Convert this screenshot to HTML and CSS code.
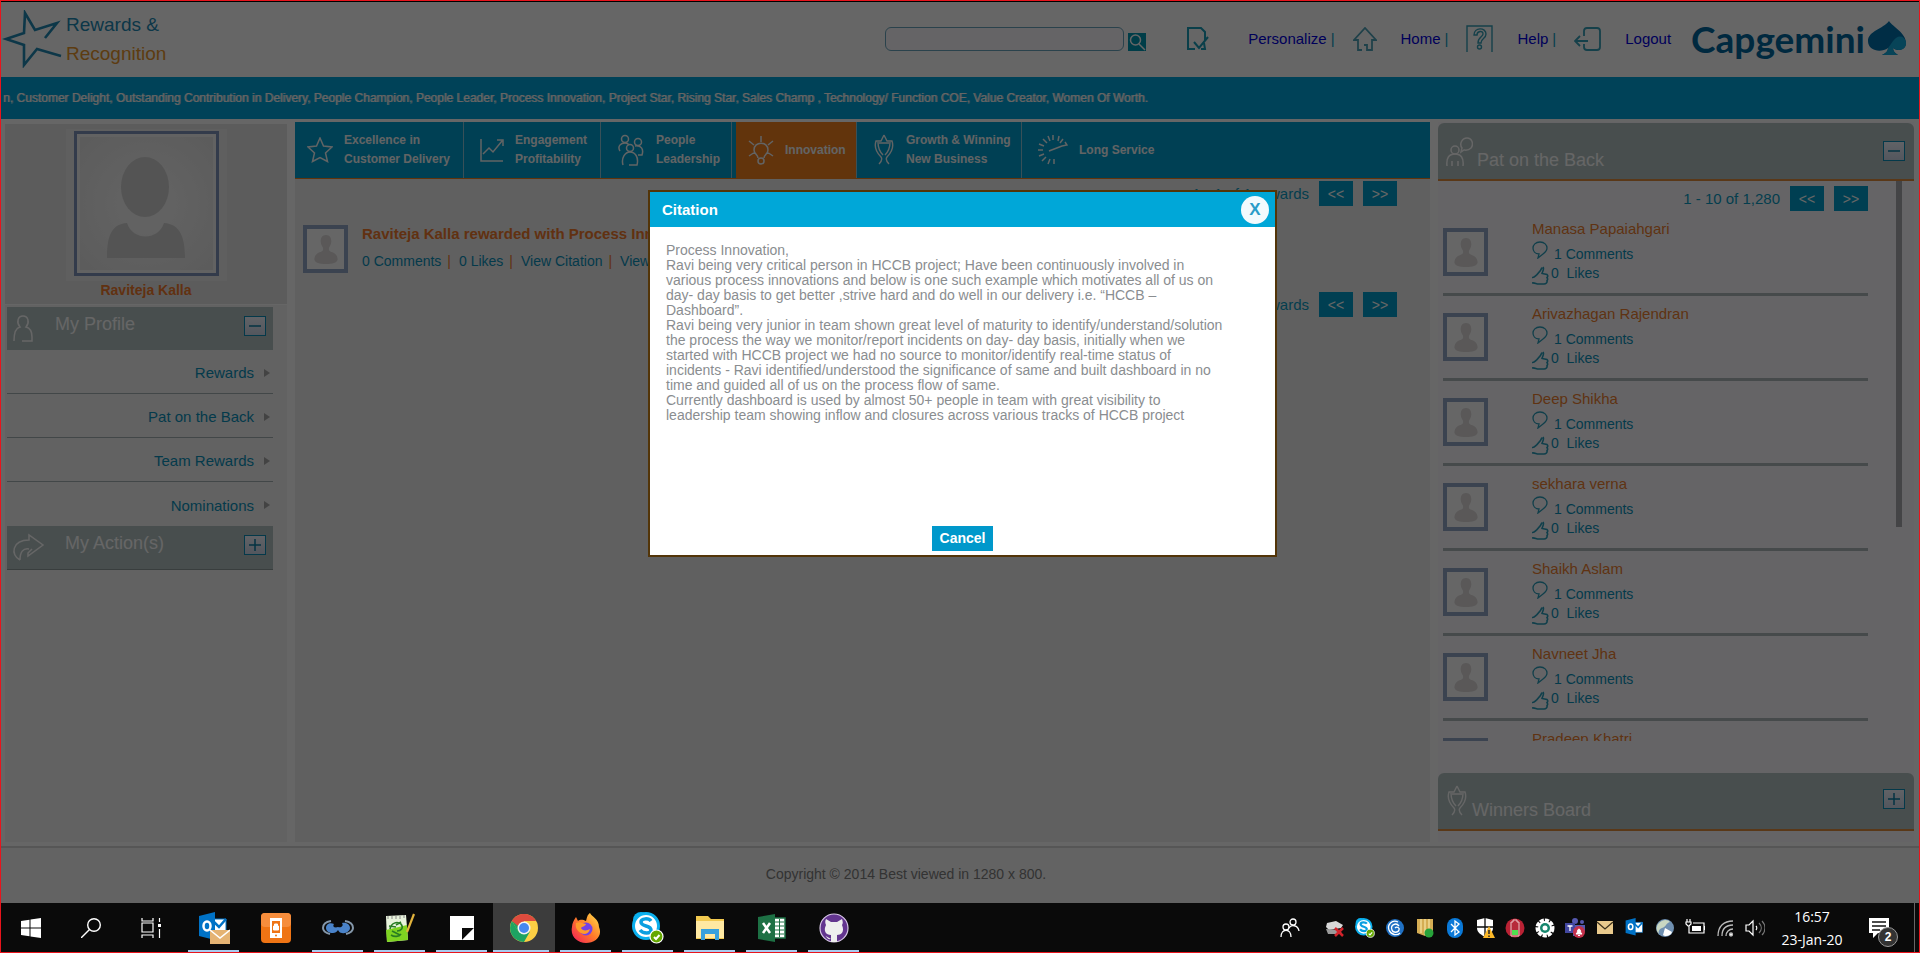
FILE: index.html
```html
<!DOCTYPE html>
<html lang="en">
<head>
<meta charset="utf-8">
<title>Rewards &amp; Recognition</title>
<link rel="stylesheet" href="styles.css">
</head>
<body>
<svg class="defs" aria-hidden="true">
  <symbol id="person" viewBox="0 0 24 32"><path d="M12 1c4 0 5.500 3 5.500 6.500 0 3-1.500 5-2.500 7v2c1 2 4 2 6 3.500 2 1.500 3 4 3 6.500-1 3-5 4.500-12 4.500S1 29.500 0 26.500C0 24 1 21.500 3 20s5-1.500 6-3.500v-2c-1-2-2.500-4-2.500-7C6.500 4 8 1 12 1z" fill="currentColor"/></symbol>
  <symbol id="bubble" viewBox="0 0 16 18"><path d="M6 17l1-4C3 13 1 10 1 7s2.500-6 7-6 7 3 7 6-2 4.500-4 6z" fill="none" stroke="currentColor" stroke-width="1.300"/></symbol>
  <symbol id="thumb" viewBox="0 0 17 19"><path d="M0 11.500c2 .5 3-1 4.500-2.500S9 5 10 1.500M11 1c1.500 2-.5 4.500-1 6.500l5 1c1.500 1.500.5 2.500 0 3 1 1.500.5 2.500 0 3 .5 2-1 3.500-3 3.500H7c-3 0-4-1.500-7-1" fill="none" stroke="currentColor" stroke-width="1.600"/></symbol>
  <symbol id="cup" viewBox="0 0 22 32"><g fill="none" stroke="currentColor" stroke-width="1.400"><path d="M11 1l3 6h5c2 6 0 11-5 16-1.500 2 0 5 2 7M11 1L8 7H3c-2 6 0 11 5 16 1.500 2 0 5-2 7"/><path d="M6 9h10M5 8c0 6 1 9 5 13M17 8c0 6-1 9-5 13"/></g></symbol>
  <symbol id="skype" viewBox="0 0 32 32"><circle cx="9" cy="8" r="8" fill="#0bb0ee"/><circle cx="18" cy="19" r="8" fill="#0bb0ee"/><circle cx="14" cy="14" r="12.500" fill="#fff" stroke="#0bb0ee" stroke-width="3"/><path d="M19 9c-2-3-10-3-10 1 0 5 10 3 10 8 0 4-8 4-11 0" fill="none" stroke="#0a9fe0" stroke-width="3.500"/><circle cx="24.500" cy="24.500" r="6.500" fill="#65a800" stroke="#fff" stroke-width="1.200"/><path d="M22 25l2 2 3.500-4" fill="none" stroke="#fff" stroke-width="2"/></symbol>
  <symbol id="outlook" viewBox="0 0 32 32"><path d="M14 7h14v16H14z" fill="#fff" stroke="#0072c6"/><path d="M14 8l7 7 7-8" fill="none" stroke="#0072c6" stroke-width="2.500"/><path d="M1 4l16-4v28L1 24z" fill="#0072c6"/><ellipse cx="9" cy="14" rx="3.500" ry="4.500" fill="none" stroke="#fff" stroke-width="2.500"/></symbol>
</svg>

<div class="page">
  <header class="top">
    <a class="brand" href="#">
      <svg width="60" height="58" viewBox="0 0 60 58"><path d="M43 28L55 13 33 20 23 3 22 23 4 29l18 6v20l13-16 24 7" fill="none" stroke="#2189b5" stroke-width="2.600"/></svg>
      <span class="brand-text"><span class="blue">Rewards &amp;</span><span class="gold">Recognition</span></span>
    </a>
    <form class="search">
      <input type="text" aria-label="Search">
      <button type="button" aria-label="Search"><svg width="18" height="18" viewBox="0 0 18 18" fill="none" stroke="#fff" stroke-width="1.500"><circle cx="7.500" cy="7" r="5"/><path d="M11 11l6 6"/></svg></button>
    </form>
    <svg class="doc" width="22" height="24" viewBox="0 0 22 24" fill="none" stroke="#1a9db8" stroke-width="2"><path d="M8 22H1V1h13l4 4v8M17 16l1 6h-4"/><path d="M7 15l5 6 9-11"/></svg>
    <nav class="links">
      <span class="navitem"><a href="#">Personalize</a><span class="bar">|</span></span>
      <span class="navitem"><svg width="24" height="24" viewBox="0 0 24 24" fill="none" stroke="#4fa3b8" stroke-width="1.800"><path d="M9 23H5V13H1L12 1l11 12h-4v10h-5v-5h-3"/></svg><a href="#">Home</a><span class="bar">|</span></span>
      <span class="navitem"><svg width="27" height="27" viewBox="0 0 27 27" fill="none" stroke="#35a0b8" stroke-width="1.400"><path d="M1 27V1h25v26"/><path d="M8 10c0-8 12-8 12-1 0 5-5 4-5 9h-3c0-6 5-6 5-9 0-4-6-3-6 1z"/><circle cx="13.500" cy="22" r="2"/></svg><a href="#">Help</a><span class="bar">|</span></span>
      <span class="navitem"><svg width="27" height="24" viewBox="0 0 27 24" fill="none" stroke="#35a0b8" stroke-width="1.800"><path d="M10 9V4q0-3 3-3h10q3 0 3 3v16q0 3-3 3H13q-3 0-3-3v-3M14 14H2M6 9l-5 5 5 5"/></svg><a href="#">Logout</a></span>
    </nav>
    <a class="company" href="#"><span>Capgemini</span>
      <svg width="40" height="38" viewBox="0 0 40 38"><path d="M22 1c4 6 17 12 17 22 0 7-8 9-13 5 0 3 2 5 5 7H15c4-2 6-4 6-7-7 5-20 3-20-7C1 11 16 9 22 1z" fill="#0070ad"/><path d="M39 22c1 8-8 10-13 6 0 3 2 5 5 7H15c4-2 6-4 6-7 3-3 4-7 8-10 4-3 9-1 10 4z" fill="#12abdb"/></svg>
    </a>
  </header>

  <div class="ticker"><p>n, Customer Delight, Outstanding Contribution in Delivery, People Champion, People Leader, Process Innovation, Project Star, Rising Star, Sales Champ , Technology/ Function COE, Value Creator, Women Of Worth.</p></div>

  <div class="columns">
    <aside class="left">
      <section class="card">
        <div class="mat"><div class="photo"><svg width="78" height="102" viewBox="0 0 78 102"><ellipse cx="38" cy="30" rx="24" ry="30" fill="#d2d2d2"/><path d="M0 101C0 80 4 67 20 66c6 18 31 18 37 0 16 1 21 14 21 35z" fill="#d2d2d2"/></svg></div></div>
        <h2>Raviteja Kalla</h2>
      </section>
      <section class="menu">
        <div class="bar-head">
          <svg width="24" height="28" viewBox="0 0 24 28" fill="none" stroke="currentColor" stroke-width="1.500"><path d="M10 27h10v-4c0-6-2-9-6-10 4-5 2-11-3-11s-7 6-3 11c-5 1-6 7-6 14"/></svg>
          <h3>My Profile</h3>
          <button type="button" class="toggle" aria-label="Collapse My Profile"><svg width="20" height="18" viewBox="0 0 20 18"><path d="M4 9h12" stroke="#0a7fa6" stroke-width="1.500"/></svg></button>
        </div>
        <ul>
          <li><a href="#">Rewards</a></li>
          <li><a href="#">Pat on the Back</a></li>
          <li><a href="#">Team Rewards</a></li>
          <li><a href="#">Nominations</a></li>
        </ul>
        <div class="bar-head action">
          <svg width="34" height="28" viewBox="0 0 34 28" fill="none" stroke="currentColor" stroke-width="1.500"><path d="M8 27C-2 22 0 7 17 7V2l14 10-15 11v-3l4-4M17 16c-6-1-9 3-9 11"/></svg>
          <h3>My Action(s)</h3>
          <button type="button" class="toggle" aria-label="Expand My Actions"><svg width="20" height="18" viewBox="0 0 20 18"><path d="M4 9h12M10 3v12" stroke="#0a7fa6" stroke-width="1.500"/></svg></button>
        </div>
      </section>
    </aside>

    <main class="center">
      <nav class="tabs">
        <a href="#" class="t1"><svg width="26" height="26" viewBox="0 0 26 26"><path d="M13 1l3.500 8 8.500 1-6.500 6 2 8.500-7.500-4-7.500 4 2-8.500L1 10l8.500-1z"/></svg><span>Excellence in<br>Customer Delivery</span></a>
        <a href="#" class="t2"><svg width="24" height="24" viewBox="0 0 24 24"><path d="M1 1v22h22M3 16l6-6 4 4 9-11M17 2h6v6"/></svg><span>Engagement<br>Profitability</span></a>
        <a href="#" class="t3"><svg width="28" height="32" viewBox="0 0 28 32"><circle cx="8" cy="5" r="3.500"/><circle cx="21" cy="8" r="3.500"/><circle cx="13" cy="14" r="3.500"/><path d="M3 17c-3-5 1-8 5-8 2 0 3 0 4 2M18 12c6-1 9 3 7 9h-4M6 31c-2-7 2-13 7-13s9 5 7 13h-8"/></svg><span>People<br>Leadership</span></a>
        <a href="#" class="t4 active"><svg width="26" height="30" viewBox="0 0 26 30"><path d="M13 1v6M1 6l5 4M25 6l-5 4M1 21l6-4M25 21l-6-4M10 23c0-3-4-4-4-8 0-9 14-9 14 0 0 4-4 5-4 8"/><circle cx="13" cy="26" r="3"/></svg><span>Innovation</span></a>
        <a href="#" class="t5"><svg width="22" height="32"><use href="#cup"/></svg><span>Growth &amp; Winning<br>New Business</span></a>
        <a href="#" class="t6"><svg width="30" height="30" viewBox="0 0 30 30"><path d="M1 9l5 2M0 15h5M1 21l5-2M4 26l4-4M10 29l2-5M16 29v-5M5 4l4 4M10 1l2 5M15 0v5M21 1l-1 5M25 4l-3 4M11 16l13-5M24 11l5-1-2-3"/></svg><span>Long Service</span></a>
      </nav>
      <div class="pager first"><span>1 - 1 of 1 rewards</span><button type="button">&lt;&lt;</button><button type="button">&gt;&gt;</button></div>
      <article class="award">
        <div class="avatar"><svg width="24" height="31"><use href="#person"/></svg></div>
        <div>
          <h2>Raviteja Kalla rewarded with Process Innovation</h2>
          <p><a href="#">0 Comments</a><i>|</i><a href="#">0 Likes</a><i>|</i><a href="#">View Citation</a><i>|</i><a href="#">View</a></p>
        </div>
      </article>
      <div class="pager"><span>1 - 1 of 1 rewards</span><button type="button">&lt;&lt;</button><button type="button">&gt;&gt;</button></div>
    </main>

    <aside class="right">
      <div class="panel-head">
        <svg width="27" height="30" viewBox="0 0 27 30" fill="none" stroke="currentColor" stroke-width="1.500"><circle cx="9" cy="13" r="4"/><path d="M1 29c-1-8 2-12 8-12s9 4 8 12M6 29v-5M12 29v-5M15 15l1-4c-3-4 0-10 5-10s7 6 4 10c-3 3-6 2-7 2z"/></svg>
        <h3>Pat on the Back</h3>
        <button type="button" class="toggle" aria-label="Collapse Pat on the Back"><svg width="20" height="18" viewBox="0 0 20 18"><path d="M4 9h12" stroke="#0a7fa6" stroke-width="1.500"/></svg></button>
      </div>
      <div class="list">
        <div class="rows">
          <div class="pager"><span>1 - 10 of 1,280</span><button type="button">&lt;&lt;</button><button type="button">&gt;&gt;</button></div>
          <article class="pat"><div class="avatar"><svg width="24" height="31"><use href="#person"/></svg></div><div><h4><a href="#">Manasa Papaiahgari</a></h4><p><svg width="16" height="18"><use href="#bubble"/></svg><a href="#">1 Comments</a></p><p class="like"><svg width="17" height="19"><use href="#thumb"/></svg><a href="#">0&nbsp; Likes</a></p></div></article>
          <article class="pat"><div class="avatar"><svg width="24" height="31"><use href="#person"/></svg></div><div><h4><a href="#">Arivazhagan Rajendran</a></h4><p><svg width="16" height="18"><use href="#bubble"/></svg><a href="#">1 Comments</a></p><p class="like"><svg width="17" height="19"><use href="#thumb"/></svg><a href="#">0&nbsp; Likes</a></p></div></article>
          <article class="pat"><div class="avatar"><svg width="24" height="31"><use href="#person"/></svg></div><div><h4><a href="#">Deep Shikha</a></h4><p><svg width="16" height="18"><use href="#bubble"/></svg><a href="#">1 Comments</a></p><p class="like"><svg width="17" height="19"><use href="#thumb"/></svg><a href="#">0&nbsp; Likes</a></p></div></article>
          <article class="pat"><div class="avatar"><svg width="24" height="31"><use href="#person"/></svg></div><div><h4><a href="#">sekhara verna</a></h4><p><svg width="16" height="18"><use href="#bubble"/></svg><a href="#">1 Comments</a></p><p class="like"><svg width="17" height="19"><use href="#thumb"/></svg><a href="#">0&nbsp; Likes</a></p></div></article>
          <article class="pat"><div class="avatar"><svg width="24" height="31"><use href="#person"/></svg></div><div><h4><a href="#">Shaikh Aslam</a></h4><p><svg width="16" height="18"><use href="#bubble"/></svg><a href="#">1 Comments</a></p><p class="like"><svg width="17" height="19"><use href="#thumb"/></svg><a href="#">0&nbsp; Likes</a></p></div></article>
          <article class="pat"><div class="avatar"><svg width="24" height="31"><use href="#person"/></svg></div><div><h4><a href="#">Navneet Jha</a></h4><p><svg width="16" height="18"><use href="#bubble"/></svg><a href="#">1 Comments</a></p><p class="like"><svg width="17" height="19"><use href="#thumb"/></svg><a href="#">0&nbsp; Likes</a></p></div></article>
          <article class="pat"><div class="avatar"><svg width="24" height="31"><use href="#person"/></svg></div><div><h4><a href="#">Pradeep Khatri</a></h4></div></article>
        </div>
        <div class="thumbbar"></div>
      </div>
      <div class="panel-head winners">
        <svg width="22" height="32"><use href="#cup"/></svg>
        <h3>Winners Board</h3>
        <button type="button" class="toggle" aria-label="Expand Winners Board"><svg width="20" height="18" viewBox="0 0 20 18"><path d="M4 9h12M10 3v12" stroke="#0a7fa6" stroke-width="1.500"/></svg></button>
      </div>
    </aside>
  </div>

  <footer class="foot">Copyright © 2014 Best viewed in 1280 x 800.</footer>

  <div class="overlay">
    <div class="modal" role="dialog" aria-labelledby="modal-title">
      <div class="modal-head"><h2 id="modal-title">Citation</h2><button type="button" class="close">X</button></div>
      <div class="modal-body">
        <p>Process Innovation,<br>Ravi being very critical person in HCCB project; Have been continuously involved in<br>various process innovations and below is one such example which motivates all of us on<br>day- day basis to get better ,strive hard and do well in our delivery i.e. “HCCB –<br>Dashboard”.</p>
        <p>Ravi being very junior in team shown great level of maturity to identify/understand/solution<br>the process the way we monitor/report incidents on day- day basis, initially when we<br>started with HCCB project we had no source to monitor/identify real-time status of<br>incidents - Ravi identified/understood the significance of same and built dashboard in no<br>time and guided all of us on the process flow of same.</p>
        <p>Currently dashboard is used by almost 50+ people in team with great visibility to<br>leadership team showing inflow and closures across various tracks of HCCB project</p>
        <button type="button" class="cancel">Cancel</button>
      </div>
    </div>
  </div>
</div>

<div class="taskbar">
  <div class="sys">
    <button type="button" aria-label="Start"><svg width="20" height="20" viewBox="0 0 20 20" fill="#fff"><path d="M0 3l8.500-1.200v7.700H0zM9.500 1.600L20 0v9.500H9.500zM0 10.500h8.500v7.700L0 17zM9.500 10.500H20V20L9.500 18.400z"/></svg></button>
    <button type="button" aria-label="Search"><svg width="20" height="20" viewBox="0 0 20 20" fill="none" stroke="#fff" stroke-width="1.400"><circle cx="13" cy="7" r="6.300"/><path d="M8.500 11.500L0 20"/></svg></button>
    <button type="button" aria-label="Task view"><svg width="20" height="20" viewBox="0 0 20 20" fill="none" stroke="#fff" stroke-width="1.200"><path d="M1 0v3h11V0M1 20v-3h11v3M1 5h11v9H1zM18.500 0v4M18.500 11v9"/><path d="M17 6h3v3h-3z" fill="#fff" stroke="none"/></svg></button>
  </div>
  <div class="apps">
    <button type="button" class="open" aria-label="Outlook"><svg width="32" height="32" viewBox="0 0 32 32"><use href="#outlook" width="32" height="32"/><path d="M12 18h20v14H12z" fill="#e5b373"/><path d="M12 18l10 8 10-8" fill="none" stroke="#fff" stroke-width="1.600"/></svg></button>
    <button type="button" aria-label="Phone lock"><svg width="30" height="30" viewBox="0 0 30 30"><rect width="30" height="30" rx="4" fill="#ef7414"/><rect width="30" height="14" rx="4" fill="#f68d3c"/><path d="M9 5h12v20H9z" fill="#fff"/><path d="M11 8h8v12h-8z" fill="#ef7414"/><path d="M12.500 13h5v4h-5zM13.500 13v-2h3v2" fill="#fff" stroke="#fff"/><circle cx="15" cy="22.500" r="1" fill="#ef7414"/></svg></button>
    <button type="button" class="open" aria-label="Connection"><svg width="32" height="16" viewBox="0 0 32 16"><path d="M9 1C3 2 1 5 1 8s3 5 7 6M23 1c6 1 8 4 8 7s-3 5-7 6" fill="none" stroke="#8497aa" stroke-width="2"/><path d="M4 8c0-4 4-6 8-4-2 3 1 4 4 3 3 1 6-1 4-4 5-1 8 2 8 5s-4 6-8 5c-2 0-3-1-4-3-1 2-3 3-5 3-4 0-7-2-7-5z" fill="#4a83c9"/></svg></button>
    <button type="button" class="open" aria-label="Notepad++"><svg width="30" height="30" viewBox="0 0 30 30"><path d="M1 3l20-1 2 25-21 2z" fill="#e8f3dc"/><path d="M1 17l21-5 1 15-21 2z" fill="#7ed321"/><path d="M3 3v3M7 3v3M11 3v3M15 3v3M19 2v3" stroke="#888"/><path d="M5 16c1-6 7-8 11-5 3 4 0 7-4 7M4 13l7 1M6 22c3 2 8 2 10-1M7 18l8 4M16 9l-5 3" fill="none" stroke="#287c22" stroke-width="1.600"/><path d="M29 1l-7 18" stroke="#e2b33c" stroke-width="2.200"/></svg></button>
    <button type="button" class="open" aria-label="Sticky notes"><svg width="24" height="24" viewBox="0 0 24 24"><path d="M0 0h24v12L12 24H0z" fill="#fff"/><path d="M12 12h12L12 24z" fill="#0a0a0a"/><path d="M24 12v12H12z" fill="#fff"/></svg></button>
    <button type="button" class="open current" aria-label="Chrome"><svg width="28" height="28" viewBox="0 0 28 28"><circle cx="14" cy="14" r="14" fill="#fccf44"/><path d="M14 14L1.900 7A14 14 0 0 1 26.100 7H14z" fill="#dd4b3e"/><path d="M1.900 7A14 14 0 0 0 14 28l6-10.500-6 2.500-6-3z" fill="#1da362"/><path d="M1.900 7L8 17.500 14 8z" fill="#1da362"/><path d="M14 7h12.100A14 14 0 0 0 1.900 7L8 12z" fill="#dd4b3e"/><circle cx="14" cy="14" r="6.500" fill="#f4f4f4"/><circle cx="14" cy="14" r="5" fill="#4688f1"/></svg></button>
    <button type="button" class="open" aria-label="Firefox"><svg width="30" height="30" viewBox="0 0 30 30"><defs><linearGradient id="ff" x1="1" y1="0" x2="0" y2="1"><stop offset="0" stop-color="#ffe34a"/><stop offset=".5" stop-color="#ff7b29"/><stop offset="1" stop-color="#f3165c"/></linearGradient></defs><path d="M19 0c2 4 9 6 9 14 4 9-4 16-13 16C6 30-1 23 1 14 1 10 3 7 5 4l2 4c3-2 5-1 8 0 1-3 1-6 4-8z" fill="url(#ff)"/><circle cx="15" cy="16" r="6.500" fill="#7542e5"/><path d="M5 10c4-2 6 0 10 1-1 3-4 2-5 4 1 3 6 3 9 1-1 5-6 6-9 4-4-2-6-6-5-10z" fill="#ff9a2b"/></svg></button>
    <button type="button" class="open" aria-label="Skype"><svg width="32" height="32"><use href="#skype"/></svg></button>
    <button type="button" class="open" aria-label="File Explorer"><svg width="30" height="26" viewBox="0 0 30 26"><path d="M1 1h12l3 3h13v20H1z" fill="#f2c94f"/><path d="M1 6h28v17H1z" fill="#ffe9a2"/><path d="M6 25V14h18v11h-4v-6H10v6z" fill="#35a0dc"/></svg></button>
    <button type="button" class="open" aria-label="Excel"><svg width="28" height="28" viewBox="0 0 28 28"><path d="M15 4h12v20H15z" fill="#fff" stroke="#1d7044" stroke-width="1.500"/><path d="M17 8h9M17 12h9M17 16h9M17 20h9M21.500 5v18" stroke="#1d7044"/><path d="M0 3l17-3v28L0 25z" fill="#1d7044"/><path d="M5 9l7 10M12 9L5 19" stroke="#fff" stroke-width="2.500"/></svg></button>
    <button type="button" class="open" aria-label="GitHub"><svg width="30" height="30" viewBox="0 0 30 30"><circle cx="15" cy="15" r="14" fill="#63358f" stroke="#d9c9e8" stroke-width="1.200"/><path d="M7 6l5 3h6l5-3c1 3 1 4 0 6 3 7-1 10-5 10v7h-6v-7c-5 0-8-4-5-10-1-2-1-4 0-6zM12 26c-4 1-4-3-7-4" fill="#eee"/></svg></button>
  </div>
  <div class="tray">
    <svg viewBox="0 0 20 20" fill="none" stroke="#fff" stroke-width="1.300"><circle cx="13" cy="4" r="3"/><circle cx="6" cy="9" r="3"/><path d="M9 10c2-4 9-3 10 3M1 19c0-9 10-9 10 0"/></svg>
    <i></i>
    <svg viewBox="0 0 20 20"><path d="M2 5l9-2 7 4-2 3-12 2-3-3z" fill="#d8d8d8"/><path d="M1 11l14 1 2 4-14 0z" fill="#9a9a9a"/><path d="M10 10l8 8M18 10l-8 8" stroke="#d3222a" stroke-width="2.500"/></svg>
    <svg><use href="#skype"/></svg>
    <svg viewBox="0 0 20 20" fill="none"><circle cx="10" cy="10" r="9" fill="#2071c4"/><path d="M13 4C7 1 2 7 4 12s8 6 11 3M14 8c-3-4-9-1-7 4 1 3 6 3 7 0 1-2-2-4-4-2" stroke="#fff" stroke-width="1.300"/></svg>
    <svg viewBox="0 0 20 20"><path d="M2 1h16v15l-8 2-8-3z" fill="#d5ad54"/><path d="M6 1v14M10 1v16M14 1v14" stroke="#fff0b4"/><circle cx="14" cy="15" r="4.500" fill="#27a33a"/></svg>
    <svg viewBox="0 0 20 20"><rect x="2" width="16" height="20" rx="8" fill="#0a79d8"/><path d="M6 6l8 8-4 3V3l4 3-8 8" fill="none" stroke="#fff" stroke-width="1.300"/></svg>
    <svg viewBox="0 0 20 20"><path d="M10 0l8 2v8c0 5-5 7-8 9-3-2-8-4-8-9V2z" fill="#fff"/><path d="M10 0v19M2 9h16" stroke="#0a0a0a" stroke-width="1.300"/><path d="M14 8l6 12H8z" fill="#fcb827"/><path d="M14 12v4M14 17.500v1.500" stroke="#222" stroke-width="1.500"/></svg>
    <svg viewBox="0 0 20 20"><circle cx="10" cy="10" r="9.500" fill="#ba2234"/><path d="M6 4h2V2h4v2h2v14H6z" fill="#b72a3b" stroke="#eac5c9"/><path d="M7 12h6v5H7z" fill="#50e050"/></svg>
    <svg viewBox="0 0 20 20" fill="none"><circle cx="10" cy="10" r="7.500" stroke="#fff" stroke-width="4" stroke-dasharray="4 1"/><circle cx="10" cy="10" r="7" fill="#fff"/><circle cx="10" cy="10" r="5" fill="#16866d"/><circle cx="10" cy="10" r="2.500" fill="#fff"/></svg>
    <svg viewBox="0 0 20 20"><circle cx="10" cy="3" r="3" fill="#5558af"/><circle cx="17" cy="4" r="2" fill="#5558af"/><path d="M8 7h12v6l-5 5H8z" fill="#5558af"/><path d="M0 5h10v10H0z" fill="#4247a0"/><path d="M2.500 8h5M5 8v5" stroke="#fff" stroke-width="1.300"/><circle cx="14" cy="14" r="6" fill="#c4314b"/><path d="M11 16c2-1 1-5 3-5s1 4 3 5zM13 17.500h2" fill="#fff" stroke="#fff"/></svg>
    <svg viewBox="0 0 20 20"><path d="M2 3h16v13H2z" fill="#e9ca8d"/><path d="M2 4l8 7 8-7" fill="none" stroke="#3d321c" stroke-width="1.300"/></svg>
    <svg><use href="#outlook"/></svg>
    <svg viewBox="0 0 20 20"><circle cx="10" cy="10" r="9" fill="#6e8fb0"/><path d="M3 6c4-5 10-5 12-2-4 1-4 5-8 6-3 1-4 4-3 6-3-3-3-7-1-10z" fill="#c9d8c2"/><path d="M10 10l7 4c-1 4-7 5-9 3z" fill="#fff"/></svg>
    <svg viewBox="0 0 20 20" fill="none" stroke="#fff" stroke-width="1.200"><path d="M8 5h11v10H4v-4M20 8v4M2 1v3M5 1v3M1 4h5v2L4 8H3L1 6zM4 8v3"/><path d="M7 8h9v5H7z" fill="#fff" stroke="none"/></svg>
    <svg viewBox="0 0 20 20" fill="none" stroke="#bbb" stroke-width="1.300"><path d="M3 18C3 8 9 3 18 3M7 18C7 11 11 7 18 7M11 18c0-4 3-7 7-7" /><circle cx="16" cy="16.500" r="1.500" fill="#fff"/></svg>
    <svg viewBox="0 0 20 20" fill="none" stroke="#fff" stroke-width="1.200"><path d="M1 7h3l4-4v14l-4-4H1zM11 8c1 1 1 3 0 4"/><path d="M14 5c3 3 3 7 0 10M17 3c4 4 4 10 0 14" stroke="#777"/></svg>
  </div>
  <div class="clock"><span>16:57</span><span>23-Jan-20</span></div>
  <button type="button" class="notes" aria-label="2 notifications"><svg width="20" height="20" viewBox="0 0 20 20"><path d="M0 0h20v15H9l-5 5v-5H0z" fill="#fff"/><path d="M3 4h14M3 8h14M3 12h8" stroke="#111" stroke-width="1.500"/></svg><b>2</b></button>
</div>
</body>
</html>
```

FILE: styles.css
```css
* { box-sizing: border-box; }
body {
  margin: 0;
  min-height: 100vh;
  display: flex;
  flex-direction: column;
  border: 1px solid #e8141c;
  font-family: "Liberation Sans", Arial, sans-serif;
  font-size: 15px;
  color: #0a9cc4;
  background: #fff;
}
h2, h3, h4, p, ul { margin: 0; padding: 0; font-weight: normal; font-size: inherit; }
a { text-decoration: none; color: inherit; }
button { font: inherit; border: 0; padding: 0; background: none; color: inherit; }
svg { display: block; flex: none; }
.defs { position: absolute; width: 0; height: 0; }

.page { position: relative; flex: 1; display: flex; flex-direction: column; border-top: 1px solid #000; }

/* header */
.top { display: flex; align-items: center; height: 75px; padding: 0 12px 2px 0; }
.brand { display: flex; align-items: center; margin-right: auto; gap: 4px; padding-left: 1px; }
.brand-text { display: flex; flex-direction: column; font-size: 19px; line-height: 29px; }
.blue { color: #2189b5; }
.gold { color: #e8962c; }
.search { display: flex; align-items: flex-end; gap: 4px; }
.search input { width: 239px; height: 24px; border: 1px solid #6aa6bd; border-radius: 6px; background: #fcfaff; }
.search button { background: #0098b4; }
.doc { margin: 0 39px 0 41px; }
.links { display: flex; align-items: center; gap: 18px; }
.navitem { display: flex; align-items: center; }
.navitem svg { margin-right: 24px; }
.navitem a { color: #0000e0; }
.bar { margin-left: 4px; }
.company { display: flex; align-items: center; gap: 2px; margin-left: 20px; color: #00679f; font-family: Lato, "Open Sans", sans-serif; font-weight: bold; font-size: 37px; line-height: 40px; }
.ticker { background: #00a5dd; height: 42px; display: flex; align-items: center; overflow: hidden; }
.ticker p { padding-left: 2px; white-space: nowrap; font-size: 12px; color: #fff; text-shadow: 1px 0 #b5d5e0; }

/* three columns */
.columns { flex: 1; display: grid; grid-template-columns: 282px minmax(0, 1fr) 476px; gap: 8px; padding: 3px 5px 4px 4px; }
.left { background: #f4f4f4; }
.card { background: #e7e7e7; padding: 5px 0 6px; display: flex; flex-direction: column; align-items: center; border-top: 2px solid #fff; border-bottom: 1px solid #fff; }
.mat { padding: 2px 8px 5px; background: #ededed; }
.photo { width: 145px; height: 145px; border: 3px solid #8094bc; outline: 3px solid #f4f4f4; outline-offset: -6px; background: radial-gradient(circle, #f4f4f4 30%, #e4e4e4); display: flex; justify-content: center; padding-top: 23px; }
.card h2 { margin-top: 1px; font-weight: bold; font-size: 14px; line-height: 16px; color: #f37a2c; }
.menu { padding: 2px 14px 0 2px; }
.bar-head { display: flex; align-items: flex-start; height: 43px; padding: 7px 7px 0 5px; background: #b4c4c4; color: #fff; }
.bar-head h3 { margin-left: 19px; margin-right: auto; font-size: 18px; line-height: 20px; }
.bar-head .toggle { margin-top: 2px; }
.bar-head.action { border-bottom: 1px solid #8f9c9c; height: 44px; }
.toggle { width: 22px; height: 20px; border: 1px solid #0a8fba; background: linear-gradient(#f2f6ff, #cfd8ea); }
.menu ul { list-style: none; }
.menu li { height: 44px; display: flex; align-items: center; justify-content: flex-end; gap: 10px; padding: 2px 3px 0 0; border-bottom: 1px solid #a5b1b4; }
.menu li:last-child { border: 0; }
.menu li a { color: #0a92bc; }
.menu li::after { content: ""; border: 4px solid transparent; border-left: 6px solid #a8a8a8; border-right: 0; }

.center { background: #efefef; }
.tabs { display: flex; height: 57px; background: #00a0d2; border-bottom: 1px solid #f58220; color: #f4f9fb; font-size: 12px; font-weight: bold; line-height: 19px; }
.tabs a { display: flex; align-items: center; gap: 11px; border-right: 1px solid #8cc8dc; }
.tabs svg { fill: none; stroke: currentColor; stroke-width: 1.500; }
.tabs .t1 { width: 169px; padding-left: 12px; }
.tabs .t2 { width: 137px; padding-left: 16px; }
.tabs .t3 { width: 131px; padding-left: 16px; }
.tabs .t4 { width: 121px; margin-left: 4px; padding-left: 12px; background: #f58220; }
.tabs .t5 { width: 165px; padding-left: 16px; }
.tabs .t6 { padding-left: 16px; border: 0; }
.pager { display: flex; justify-content: flex-end; align-items: center; gap: 10px; }
.pager button { width: 34px; height: 25px; background: #009fcd; color: #fff; font-size: 14px; }
.center .pager { padding-right: 33px; }
.center .first { padding-top: 2px; }
.award { display: flex; gap: 14px; padding: 18px 8px 19px; }
.avatar { flex: none; width: 45px; height: 48px; margin-top: 1px; border: 4px solid #93a7c8; background: #fff; color: #e0dcdc; display: flex; align-items: center; justify-content: center; }
.award h2 { font-weight: bold; line-height: 20px; color: #f37a2c; white-space: nowrap; }
.award p { display: flex; font-size: 14px; line-height: 20px; margin-top: 7px; color: #0a92bc; }
.award i { font-style: normal; color: #f37a2c; margin: 0 8px 0 6px; }

.right { background: #fdfbff; padding-top: 1px; }
.panel-head { display: flex; align-items: flex-start; height: 58px; padding: 14px 9px 0 8px; background: #b4c4c4; border-bottom: 2px solid #e08c3c; border-radius: 6px 6px 0 0; color: #fff; }
.panel-head h3 { margin: 13px auto 0 4px; font-size: 18px; line-height: 20px; }
.panel-head .toggle { margin-top: 4px; }
.list { display: flex; justify-content: space-between; max-height: 560px; overflow: hidden; padding: 0 12px 0 5px; }
.rows { width: 425px; padding-top: 5px; }
.thumbbar { width: 6px; height: 346px; background: #aaabae; }
.pat { display: flex; gap: 44px; height: 85px; border-bottom: 3px solid #b0b8bc; padding-top: 8px; }
.pat .avatar { margin-top: 9px; }
.pat h4 { line-height: 20px; margin-bottom: 6px; color: #ee8030; }
.pat p { display: flex; align-items: flex-start; gap: 6px; font-size: 14px; line-height: 19px; height: 19px; color: #0a92bc; }
.pat p svg { color: #2a9dbb; margin-top: -4px; }
.pat p.like { gap: 2px; }
.pat p.like svg { margin-top: 2px; }
.winners { margin-top: 32px; padding-top: 12px; }
.winners h3 { margin-top: 15px; }
.foot { height: 57px; border-top: 2px solid #d6d6d6; background: #f7f7f7; display: flex; align-items: center; justify-content: center; padding: 0 108px 4px 0; font-size: 14px; color: #808080; }

/* dialog */
.overlay { position: absolute; inset: 0; padding: 188px 0 0 5px; background: rgba(0, 0, 0, .6); display: flex; justify-content: center; align-items: flex-start; }
.modal { width: 629px; border: 2px solid #533508; background: #fff; }
.modal-head { display: flex; align-items: center; justify-content: space-between; height: 35px; padding: 0 6px 0 12px; background: #00a7d8; color: #fff; }
.modal-head h2 { font-weight: bold; }
.close { width: 28px; height: 28px; border-radius: 50%; background: #f2fafd; color: #2a9cc8; font-weight: bold; font-size: 17px; }
.modal-body { display: flex; flex-direction: column; padding: 16px 16px 4px; font-size: 14px; line-height: 15px; color: #8a8d90; white-space: nowrap; }
.cancel { align-self: center; margin-top: 103px; width: 61px; height: 25px; background: #0098cb; color: #fff; font-weight: bold; font-size: 14px; }

/* taskbar */
.taskbar { height: 49px; display: flex; background: #0a0a0a; color: #fff; padding-right: 4px; }
.sys { display: flex; padding-right: 2px; }
.sys button { width: 60px; display: flex; align-items: center; justify-content: center; }
.apps { display: flex; margin-right: auto; }
.apps button { width: 62px; display: flex; align-items: center; justify-content: center; position: relative; }
.apps .open::after { content: ""; position: absolute; left: 5px; right: 6px; bottom: 0; height: 2px; background: #a9cbee; }
.apps .current { background: #3c3c3c; }
.apps .current::after { left: 0; }
.tray { display: flex; align-items: center; }
.tray svg { width: 20px; height: 20px; margin: 0 5px; }
.tray i { width: 15px; }
.clock { width: 84px; display: flex; flex-direction: column; align-items: center; justify-content: center; font-family: "Open Sans", "Noto Sans", sans-serif; font-size: 14px; line-height: 23px; }
.notes { width: 61px; padding: 0 0 0 15px; display: flex; align-items: center; position: relative; border-right: 1px solid #666; }
.notes b { position: absolute; left: 24px; top: 24px; width: 20px; height: 20px; border: 1px solid #999; border-radius: 50%; background: #333; font-size: 12px; line-height: 18px; text-align: center; }
```
